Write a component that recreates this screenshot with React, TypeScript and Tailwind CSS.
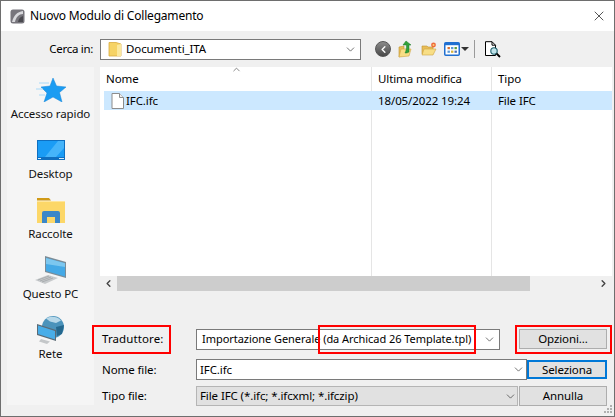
import { ChevronDown, ChevronUp, ChevronLeft, ChevronRight, X } from 'lucide-react';

const uiFont = "font-['Noto_Sans','Open_Sans',sans-serif]";

function AppIcon() {
  return (
    <svg width="15" height="15" viewBox="0 0 15 15" className="shrink-0">
      <rect x="0.5" y="0.5" width="14" height="14" rx="2.5" fill="#77757c" />
      <path d="M2 13 C4 6 7 3 13 2 L13 5 C9 5 6 8 5 13 Z" fill="#d8d8dc" />
      <path d="M8 13 C8.5 10 10 8 13 7 L13 13 Z" fill="#4a494f" />
    </svg>
  );
}

function SmallFolder() {
  return (
    <svg width="14" height="16" viewBox="0 0 14 16">
      <path d="M1 1.5 H8 L13 3 V15 H1 Z" fill="#f6d365" stroke="#d9ab40" strokeWidth="0.8" />
      <path d="M9 4 L13 3 V15 H9 Z" fill="#fbe89d" />
    </svg>
  );
}

function NavFolderUp() {
  return (
    <svg width="16" height="18" viewBox="0 0 16 18">
      <path d="M1 7 L6 6 V15 L1 17 Z" fill="#e8bd57" stroke="#c0932f" strokeWidth="0.6" />
      <path d="M1 17 L3 9 H13 L11 16 Z" fill="#f8de85" stroke="#cfa545" strokeWidth="0.6" />
      <path d="M8 1 L13 5 H11 V12 C9.5 13 8 13 7 13 C8 11 8.5 9 8.5 5 H5 Z" fill="#31a13a" stroke="#1d7a28" strokeWidth="0.5" />
    </svg>
  );
}

function NavFolderNew() {
  return (
    <svg width="16" height="16" viewBox="0 0 16 16">
      <path d="M1 5 H6 L7 6 H12 V13 H1 Z" fill="#e8bd57" stroke="#c0932f" strokeWidth="0.6" />
      <path d="M1 14 L3 8 H15 L12 14 Z" fill="#f8de85" stroke="#cfa545" strokeWidth="0.6" />
      <circle cx="12.5" cy="4" r="2.4" fill="#ef6a3a" />
      <circle cx="12.5" cy="4" r="1" fill="#fbd27a" />
    </svg>
  );
}

function ViewsIcon() {
  return (
    <svg width="16" height="14" viewBox="0 0 16 14">
      <rect x="0.75" y="0.75" width="14.5" height="12.5" rx="1" fill="#fff" stroke="#1f6fd1" strokeWidth="1.5" />
      <rect x="1" y="1" width="14" height="2.2" fill="#1f6fd1" />
      <rect x="3.5" y="5" width="2.4" height="2.2" fill="#d9702f" />
      <rect x="7" y="5" width="2.4" height="2.2" fill="#5c9ad6" />
      <rect x="10.5" y="5" width="2.4" height="2.2" fill="#5b9e42" />
      <rect x="3.5" y="8.6" width="2.4" height="2.2" fill="#5c9ad6" />
      <rect x="7" y="8.6" width="2.4" height="2.2" fill="#d8b23a" />
      <rect x="10.5" y="8.6" width="2.4" height="2.2" fill="#4a6fb5" />
    </svg>
  );
}

function PreviewIcon() {
  return (
    <svg width="17" height="17" viewBox="0 0 17 17">
      <path d="M1.5 0.7 H8 L11.5 4.2 V14.5 H1.5 Z" fill="#fff" stroke="#000" strokeWidth="1" />
      <path d="M8 0.7 V4.2 H11.5" fill="none" stroke="#000" strokeWidth="1" />
      <circle cx="10" cy="10" r="3.2" fill="#bfe3ea" stroke="#1d5f6a" strokeWidth="1.1" />
      <path d="M12.5 12.5 L16 16" stroke="#000" strokeWidth="1.8" />
    </svg>
  );
}

function StarIcon() {
  return (
    <svg width="30" height="24" viewBox="0 0 30 24">
      <path d="M17 0 L20.5 8 L30 9 L23.5 14.5 L26 24 L17 19 L8 24 L11 15 L5 9 L14 8 Z" fill="#1b9cf2" stroke="#1687d8" strokeWidth="0.5" />
      <path d="M3 5 H13 M0 11 H7 M3 17 H9" stroke="#a8d9f8" strokeWidth="1" />
    </svg>
  );
}

function DesktopIcon() {
  return (
    <svg width="28" height="20" viewBox="0 0 28 20">
      <rect width="28" height="20" fill="#0f6fc0" />
      <rect x="1" y="1" width="26" height="16" fill="#1a9cf5" />
      <path d="M8 17 L21 1 H27 V8 L19 17 Z" fill="#45b4fa" />
      <rect x="1" y="18" width="3" height="1" fill="#d5ecfb" />
      <rect x="22" y="18" width="5" height="1" fill="#d5ecfb" />
    </svg>
  );
}

function LibraryIcon() {
  return (
    <svg width="28" height="25" viewBox="0 0 28 25">
      <path d="M0 0 H12 L14 2.5 H0 Z" fill="#d09a17" />
      <rect y="3" width="28" height="22" fill="#fcd768" />
      <rect y="3" width="28" height="1" fill="#ffe69c" />
      <path d="M5 25 V15 Q5 13 7 13 H21 Q23 13 23 15 V25 H18 V19 H10 V25 Z" fill="#3a87c8" />
    </svg>
  );
}

function PcIcon() {
  return (
    <svg width="31" height="28" viewBox="0 0 31 28">
      <path d="M10 0 L31 6 V22 L10 16 Z" fill="#7a8c98" />
      <path d="M11 2 L30 7.3 V20.5 L11 15 Z" fill="#44a9e6" />
      <path d="M11 2 L30 7.3 V11 L11 8 Z" fill="#7cc7ef" />
      <path d="M0 24 L13 19 L23 22 L10 28 Z" fill="#c7cacc" />
      <path d="M3 24 L14 20 M5 25 L16 21 M7 26 L18 22" stroke="#9ca0a3" strokeWidth="0.7" fill="none" />
    </svg>
  );
}

function NetworkIcon() {
  return (
    <svg width="27" height="28" viewBox="0 0 27 28">
      <circle cx="16" cy="11" r="11" fill="#4b93bb" />
      <path d="M9 2.5 C13 0 20 0 24 4.5 L19 7 L13 5.5 Z" fill="#b7d8e9" />
      <path d="M19 11 L27 9 L25 18 L20 20 Z" fill="#25688e" />
      <path d="M0 8 L19 14 V25 L0 19 Z" fill="#5b6a75" />
      <path d="M1 9.5 L18 15 V23.5 L1 18 Z" fill="#48ade8" />
      <path d="M4 23 L13 25.5 L10 28 L2 25.5 Z" fill="#c4c7c9" />
    </svg>
  );
}

function PlaceItem({ label, icon }: { label: string; icon: React.ReactNode }) {
  return (
    <div className="h-[60px] flex flex-col items-center">
      <div className="h-[38px] flex items-center justify-center">{icon}</div>
      <span className="-mt-[4px] text-[11.5px] leading-[18px] text-[#111] whitespace-nowrap">{label}</span>
    </div>
  );
}

function GridLine({ left }: { left: string }) {
  return <div className={`absolute top-0 bottom-0 w-px bg-[#e5e5e5] ${left}`} />;
}

export default function App() {
  return (
    <div className={`w-[615px] h-[417px] relative overflow-hidden flex flex-col border border-[#6e6e6e] bg-[#f0f0f0] text-[11.5px] tracking-[-0.1px] text-black ${uiFont}`}>
      {/* title bar */}
      <div className="h-[30px] bg-white flex items-center shrink-0">
        <div className="ml-[9px] mr-[5px] flex"><AppIcon /></div>
        <span className="text-[12px] tracking-[-0.2px]">Nuovo Modulo di Collegamento</span>
        <X size={16} strokeWidth={1} className="ml-auto mr-[7px]" />
      </div>

      {/* look in row */}
      <div className="h-[36px] flex items-center shrink-0">
        <span className="w-[92px] text-right tracking-[-0.3px]">Cerca in:</span>
        <div className="ml-[7px] w-[261px] h-[21px] bg-white border border-[#7a7a7a] flex items-center pl-[7px]">
          <SmallFolder />
          <span className="ml-[4px]">Documenti_ITA</span>
          <ChevronDown size={13} strokeWidth={1.25} className="ml-auto mr-[3px] text-[#333]" />
        </div>
        <div className="ml-[14px] flex items-center">
          <div className="w-[16px] h-[16px] rounded-full bg-linear-to-b from-[#8c8c8c] to-[#4a4a4a] flex items-center justify-center border border-[#555]">
            <ChevronLeft size={11} strokeWidth={3} className="text-white" />
          </div>
          <div className="ml-[7px] flex"><NavFolderUp /></div>
          <div className="ml-[7px] flex"><NavFolderNew /></div>
          <div className="ml-[7px] flex"><ViewsIcon /></div>
          <div className="ml-[1px] w-0 h-0 border-x-[4px] border-x-transparent border-t-[4px] border-t-[#333]" />
          <div className="ml-[5px] w-px h-[18px] bg-[#9a9a9a]" />
          <div className="ml-[9px] flex"><PreviewIcon /></div>
        </div>
      </div>

      <div className="flex flex-1 min-h-0">
        {/* places */}
        <div className="ml-[6px] w-[87px] h-[338px] bg-[#f5f5f5] flex flex-col pt-[4px] shrink-0">
          <PlaceItem label="Accesso rapido" icon={<StarIcon />} />
          <PlaceItem label="Desktop" icon={<DesktopIcon />} />
          <PlaceItem label="Raccolte" icon={<LibraryIcon />} />
          <PlaceItem label="Questo PC" icon={<PcIcon />} />
          <PlaceItem label="Rete" icon={<NetworkIcon />} />
        </div>

        <div className="ml-[6px] w-[512px] flex flex-col">
          {/* file list */}
          <div className="relative h-[209px] bg-white shrink-0">
            <GridLine left="left-[271px]" />
            <GridLine left="left-[391px]" />
            <ChevronUp size={11} strokeWidth={1.5} className="absolute left-[131px] top-[-3px] text-[#555]" />
            <div className="relative h-[24px] flex items-center">
              <span className="ml-[6px] w-[272px]">Nome</span>
              <span className="w-[120px]">Ultima modifica</span>
              <span>Tipo</span>
            </div>
            <div className="relative ml-[4px] h-[19px] bg-[#cce8ff] flex items-center">
              <svg width="13" height="16" viewBox="0 0 13 16" className="ml-[7px]">
                <path d="M1 0.5 H8.5 L12.5 4.5 V15.5 H1 Z" fill="#fff" stroke="#8c8c8c" />
                <path d="M8.5 0.5 V4.5 H12.5" fill="#eee" stroke="#8c8c8c" />
              </svg>
              <span className="ml-[2px] w-[252px]">IFC.ifc</span>
              <span className="w-[120px]">18/05/2022 19:24</span>
              <span>File IFC</span>
            </div>
          </div>

          {/* horizontal scrollbar */}
          <div className="h-[15px] flex items-center shrink-0">
            <div className="w-[17px] flex justify-center"><ChevronLeft size={11} strokeWidth={3} className="text-[#444]" /></div>
            <div className="w-[413px] h-full bg-[#cdcdcd]" />
            <div className="ml-auto w-[17px] flex justify-center"><ChevronRight size={11} strokeWidth={3} className="text-[#444]" /></div>
          </div>

          {/* translator */}
          <div className="mt-[38px] h-[20px] flex items-center shrink-0">
            <span className="w-[96px] pl-[2px] tracking-[0.1px]">Traduttore:</span>
            <div className="w-[304px] h-[21px] bg-white border border-[#7a7a7a] flex items-center pl-[5px]">
              <span className="text-[11px] tracking-[-0.05px] whitespace-nowrap">Importazione Generale (da Archicad 26 Template.tpl)</span>
              <ChevronDown size={13} strokeWidth={1.25} className="ml-auto mr-[3px] text-[#333]" />
            </div>
            <button className="ml-[19px] w-[88px] h-[20px] bg-[#e1e1e1] border border-[#adadad] leading-none">Opzioni...</button>
          </div>

          {/* file name */}
          <div className="mt-[10px] h-[21px] flex items-center shrink-0">
            <span className="w-[96px] pl-[2px]">Nome file:</span>
            <div className="w-[331px] h-[21px] bg-white border border-[#7a7a7a] flex items-center pl-[3px]">
              <span>IFC.ifc</span>
              <ChevronDown size={13} strokeWidth={1.25} className="ml-auto mr-[1px] text-[#333]" />
            </div>
            <button className="w-[80px] h-[19px] bg-[#e1e1e1] border-2 border-[#0078d7] leading-none">Seleziona</button>
          </div>

          {/* file type */}
          <div className="mt-[6px] h-[20px] flex items-center shrink-0">
            <span className="w-[96px] pl-[2px]">Tipo file:</span>
            <div className="w-[322px] h-[20px] bg-[#e1e1e1] border border-[#b5b5b5] flex items-center pl-[3px]">
              <span>File IFC (*.ifc; *.ifcxml; *.ifczip)</span>
              <ChevronDown size={13} strokeWidth={1.25} className="ml-auto text-[#333]" />
            </div>
            <button className="ml-[1px] w-[88px] h-[20px] bg-[#e1e1e1] border border-[#adadad] leading-none">Annulla</button>
          </div>
        </div>
      </div>

      {/* red annotation boxes */}
      <div className="absolute left-[91px] top-[324px] w-[79px] h-[29px] border-2 border-[#ff0000]" />
      <div className="absolute left-[317px] top-[324px] w-[158px] h-[29px] border-2 border-[#ff0000]" />
      <div className="absolute left-[514px] top-[324px] w-[97px] h-[29px] border-2 border-[#ff0000]" />

      {/* size grip */}
      <div className="absolute right-[2px] bottom-[3px] w-[8px] h-[8px] grid grid-cols-3 gap-px">
        <span /><span /><span className="bg-[#b0b0b0]" />
        <span /><span className="bg-[#b0b0b0]" /><span className="bg-[#b0b0b0]" />
        <span className="bg-[#b0b0b0]" /><span className="bg-[#b0b0b0]" /><span className="bg-[#b0b0b0]" />
      </div>
    </div>
  );
}
